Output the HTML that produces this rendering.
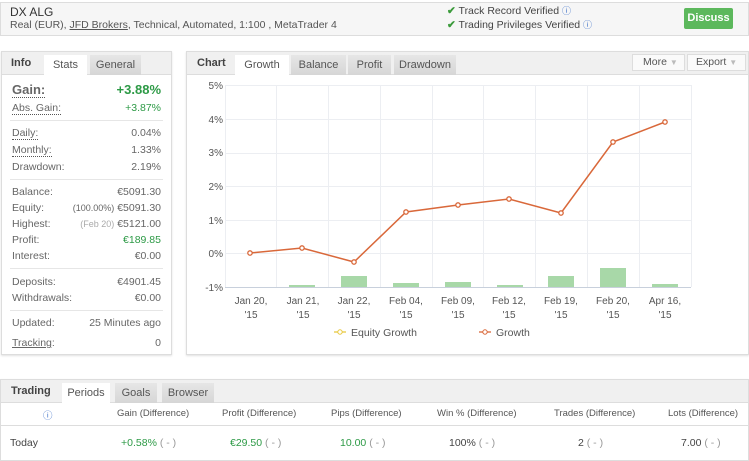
<!DOCTYPE html>
<html><head><meta charset="utf-8"><style>
*{margin:0;padding:0;box-sizing:border-box}
body{width:749px;height:458px;background:#fff;font-family:"Liberation Sans",sans-serif;color:#555;position:relative;overflow:hidden;font-size:11px}
.a{position:absolute}
.box{position:absolute;border:1px solid #ddd;background:#fff;box-shadow:0 1px 2px rgba(0,0,0,.12)}
.tabbar{position:absolute;left:0;right:0;top:0;height:23px;background:#f0f0f0;border-bottom:1px solid #ddd}
.tab{position:absolute;top:3px;height:20px;line-height:20px;text-align:center;font-size:11px;color:#555;background:linear-gradient(#e6e6e6,#d6d6d6)}
.tab.on{background:#fff;height:21px}
.ttl{position:absolute;top:0;height:23px;line-height:23px;font-weight:bold;color:#444;font-size:11px}
.row{position:absolute;left:10px;right:10px;height:16px;line-height:16px;font-size:10.5px;color:#666}
.row span{position:absolute;right:0}
.dot{border-bottom:1px dotted #555}
.g{color:#2d9a46}
.sep{position:absolute;left:8px;right:8px;height:1px;background:#e6e6e6}
.gl{stroke:#eceef2;stroke-width:1}
</style></head><body>
<div class="a" style="left:0;top:2px;width:749px;height:34px;background:#f6f6f6;border:1px solid #ddd"></div>
<div class="a" style="left:10px;top:5px;font-size:12px;color:#333">DX ALG</div>
<div class="a" style="left:10px;top:19px;font-size:10.5px;color:#555">Real (EUR), <u>JFD Brokers</u>, Technical, Automated, 1:100 , MetaTrader 4</div>
<div class="a" style="left:447px;top:4px;font-size:10.5px;color:#444"><span style="color:#3a9a3a;font-weight:bold">✔</span> Track Record Verified <span style="color:#3b6fc8;font-size:9px">ⓘ</span></div>
<div class="a" style="left:447px;top:18px;font-size:10.5px;color:#444"><span style="color:#3a9a3a;font-weight:bold">✔</span> Trading Privileges Verified <span style="color:#3b6fc8;font-size:9px">ⓘ</span></div>
<div class="a" style="left:684px;top:8px;width:49px;height:21px;background:#5cb85c;border-radius:2px;color:#fff;font-weight:bold;font-size:11px;text-align:center;line-height:21px">Discuss</div>

<!-- left panel -->
<div class="box" style="left:1px;top:51px;width:171px;height:304px">
<div class="tabbar"></div>
<div class="ttl" style="left:9px">Info</div>
<div class="tab on" style="left:42px;width:43px">Stats</div>
<div class="tab" style="left:88px;width:51px">General</div>
<div class="row" style="top:30px;font-size:13px;color:#555;font-weight:bold"><b class="dot" style="color:#666">Gain:</b><span class="g" style="font-size:13px">+3.88%</span></div>
<div class="row" style="top:48px"><i class="dot" style="font-style:normal">Abs. Gain:</i><span class="g">+3.87%</span></div>
<div class="sep" style="top:68px"></div>
<div class="row" style="top:73px"><i class="dot" style="font-style:normal">Daily:</i><span>0.04%</span></div>
<div class="row" style="top:90px"><i class="dot" style="font-style:normal">Monthly:</i><span>1.33%</span></div>
<div class="row" style="top:107px">Drawdown:<span>2.19%</span></div>
<div class="sep" style="top:127px"></div>
<div class="row" style="top:132px">Balance:<span>€5091.30</span></div>
<div class="row" style="top:148px">Equity:<span><small style="font-size:9px">(100.00%)</small> €5091.30</span></div>
<div class="row" style="top:164px">Highest:<span><small style="font-size:9px;color:#aaa">(Feb 20)</small> €5121.00</span></div>
<div class="row" style="top:180px">Profit:<span class="g">€189.85</span></div>
<div class="row" style="top:196px">Interest:<span>€0.00</span></div>
<div class="sep" style="top:216px"></div>
<div class="row" style="top:222px">Deposits:<span>€4901.45</span></div>
<div class="row" style="top:238px">Withdrawals:<span>€0.00</span></div>
<div class="sep" style="top:258px"></div>
<div class="row" style="top:263px">Updated:<span>25 Minutes ago</span></div>
<div class="row" style="top:283px"><u>Tracking</u>:<span>0</span></div>
</div>

<!-- chart panel -->
<div class="box" style="left:186px;top:51px;width:563px;height:304px">
<div class="tabbar"></div>
<div class="ttl" style="left:10px">Chart</div>
<div class="tab on" style="left:48px;width:54px">Growth</div>
<div class="tab" style="left:104px;width:55px">Balance</div>
<div class="tab" style="left:161px;width:43px">Profit</div>
<div class="tab" style="left:207px;width:62px">Drawdown</div>
<div class="a" style="left:445px;top:2px;width:53px;height:17px;border:1px solid #ddd;background:#fafafa;line-height:15px;font-size:10.5px;padding-left:10px">More <span style="color:#bbb;font-size:8px">▼</span></div>
<div class="a" style="left:500px;top:2px;width:59px;height:17px;border:1px solid #ddd;background:#fafafa;line-height:15px;font-size:10.5px;padding-left:8px">Export <span style="color:#bbb;font-size:8px">▼</span></div>
</div>
<svg class="a" style="left:186px;top:75px" width="563" height="270">
<g font-family="Liberation Sans" font-size="10" fill="#555" text-anchor="end">
<text x="37" y="14">5%</text><text x="37" y="48">4%</text><text x="37" y="81">3%</text><text x="37" y="115">2%</text><text x="37" y="149">1%</text><text x="37" y="182">0%</text><text x="37" y="216">-1%</text></g>
<g class="gl">
<line x1="39" y1="10.5" x2="505" y2="10.5"/><line x1="39" y1="44.5" x2="505" y2="44.5"/><line x1="39" y1="78.5" x2="505" y2="78.5"/><line x1="39" y1="111.5" x2="505" y2="111.5"/><line x1="39" y1="145.5" x2="505" y2="145.5"/><line x1="39" y1="178.5" x2="505" y2="178.5"/>
<line x1="39.5" y1="10" x2="39.5" y2="212"/><line x1="90.5" y1="10" x2="90.5" y2="212"/><line x1="142.5" y1="10" x2="142.5" y2="212"/><line x1="194.5" y1="10" x2="194.5" y2="212"/><line x1="246.5" y1="10" x2="246.5" y2="212"/><line x1="297.5" y1="10" x2="297.5" y2="212"/><line x1="349.5" y1="10" x2="349.5" y2="212"/><line x1="401.5" y1="10" x2="401.5" y2="212"/><line x1="453.5" y1="10" x2="453.5" y2="212"/><line x1="505.5" y1="10" x2="505.5" y2="212"/>
</g>
<g fill="#a8d8a8">
<rect x="103" y="210" width="26" height="2"/><rect x="155" y="201" width="26" height="11"/><rect x="207" y="208" width="26" height="4"/><rect x="259" y="207" width="26" height="5"/><rect x="311" y="210" width="26" height="2"/><rect x="362" y="201" width="26" height="11"/><rect x="414" y="193" width="26" height="19"/><rect x="466" y="209" width="26" height="3"/>
</g>
<line x1="39" y1="212.5" x2="505" y2="212.5" stroke="#c8d0dc"/>
<polyline fill="none" stroke="#d9683a" stroke-width="1.5" points="64,178 116,173 168,187 220,137 272,130 323,124 375,138 427,67 479,47"/>
<g fill="#fff" stroke="#d9683a" stroke-width="1.3">
<circle cx="64" cy="178" r="2.2"/><circle cx="116" cy="173" r="2.2"/><circle cx="168" cy="187" r="2.2"/><circle cx="220" cy="137" r="2.2"/><circle cx="272" cy="130" r="2.2"/><circle cx="323" cy="124" r="2.2"/><circle cx="375" cy="138" r="2.2"/><circle cx="427" cy="67" r="2.2"/><circle cx="479" cy="47" r="2.2"/></g>
<g font-family="Liberation Sans" font-size="10" fill="#555" text-anchor="middle">
<text x="65" y="229">Jan 20,</text><text x="65" y="243">'15</text>
<text x="117" y="229">Jan 21,</text><text x="117" y="243">'15</text>
<text x="168" y="229">Jan 22,</text><text x="168" y="243">'15</text>
<text x="220" y="229">Feb 04,</text><text x="220" y="243">'15</text>
<text x="272" y="229">Feb 09,</text><text x="272" y="243">'15</text>
<text x="323" y="229">Feb 12,</text><text x="323" y="243">'15</text>
<text x="375" y="229">Feb 19,</text><text x="375" y="243">'15</text>
<text x="427" y="229">Feb 20,</text><text x="427" y="243">'15</text>
<text x="479" y="229">Apr 16,</text><text x="479" y="243">'15</text>
</g>
<line x1="148" y1="257" x2="160" y2="257" stroke="#e8c840" stroke-width="1.3"/><circle cx="154" cy="257" r="2.2" fill="#fff" stroke="#e8c840"/>
<text x="165" y="261" font-family="Liberation Sans" font-size="10.5" fill="#555">Equity Growth</text>
<line x1="293" y1="257" x2="305" y2="257" stroke="#d9683a" stroke-width="1.3"/><circle cx="299" cy="257" r="2.2" fill="#fff" stroke="#d9683a"/>
<text x="310" y="261" font-family="Liberation Sans" font-size="10.5" fill="#555">Growth</text>
</svg>

<!-- trading -->
<div class="box" style="left:0;top:379px;width:749px;height:82px">
<div class="tabbar"></div>
<div class="ttl" style="left:10px">Trading</div>
<div class="tab on" style="left:61px;width:48px">Periods</div>
<div class="tab" style="left:114px;width:42px">Goals</div>
<div class="tab" style="left:161px;width:52px">Browser</div>
<div class="a" style="left:0;right:0;top:45px;height:1px;background:#ddd"></div>
<div class="a" style="top:28px;left:0;width:749px;font-size:9.5px;color:#555">
<span class="a" style="left:42px;color:#3b6fc8">ⓘ</span>
<span class="a" style="left:116px">Gain (Difference)</span>
<span class="a" style="left:221px">Profit (Difference)</span>
<span class="a" style="left:330px">Pips (Difference)</span>
<span class="a" style="left:436px">Win % (Difference)</span>
<span class="a" style="left:553px">Trades (Difference)</span>
<span class="a" style="left:667px">Lots (Difference)</span>
</div>
<div class="a" style="top:57px;left:0;width:749px;font-size:10.5px;color:#444">
<span class="a" style="left:9px">Today</span>
<span class="a g" style="left:120px">+0.58% <span style="color:#999">( - )</span></span>
<span class="a g" style="left:229px">€29.50 <span style="color:#999">( - )</span></span>
<span class="a g" style="left:339px">10.00 <span style="color:#999">( - )</span></span>
<span class="a" style="left:448px">100% <span style="color:#999">( - )</span></span>
<span class="a" style="left:577px">2 <span style="color:#999">( - )</span></span>
<span class="a" style="left:680px">7.00 <span style="color:#999">( - )</span></span>
</div>
</div>
</body></html>
